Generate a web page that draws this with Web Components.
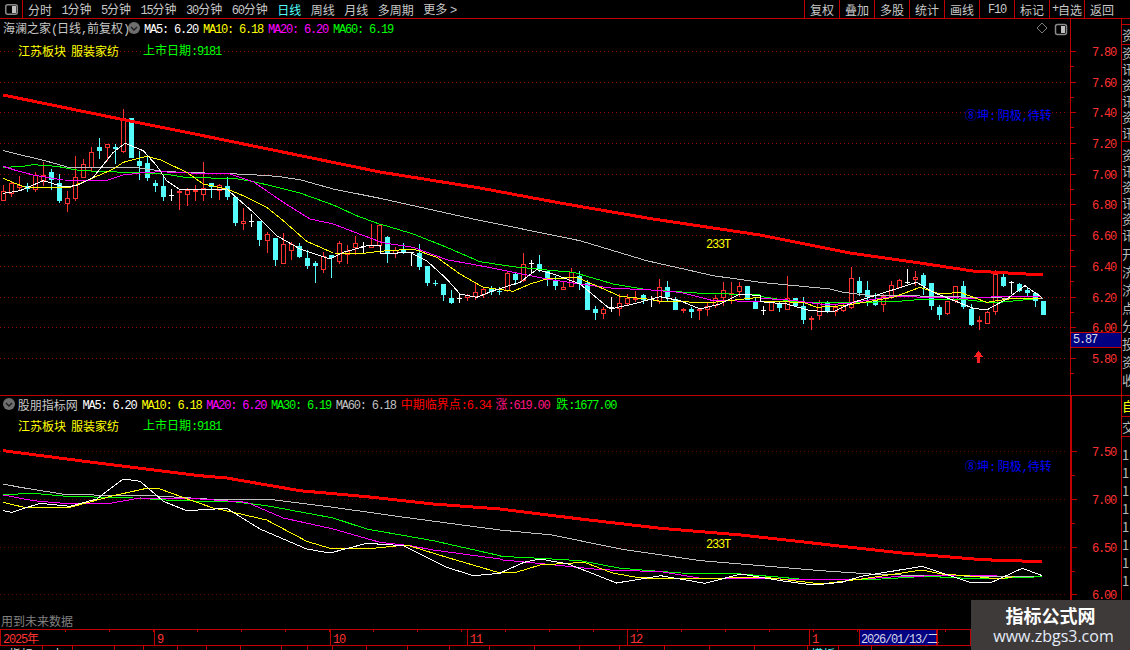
<!DOCTYPE html>
<html>
<head>
<meta charset="utf-8">
<title>海澜之家</title>
<style>
    html, body { margin: 0; background: #000; overflow: hidden; }
    body { width: 1130px; height: 650px; font: 12px "Noto Sans CJK SC", "Liberation Sans", sans-serif; }
</style>
</head>
<body>
<stock-app>
    <top-bar></top-bar>
    <chart-panel slot="upper" top="20" height="377" kind="upper">
        <legend-row>
            <q-text style="color:#c8c8c8;margin-left:3px;width:125px">海澜之家(日线,前复权)</q-text>
            <round-chevron></round-chevron>
            <q-text style="color:#fff;margin-left:4px">MA5: 6.20</q-text>
            <q-text style="color:#ff0">MA10: 6.18</q-text>
            <q-text style="color:#f0f">MA20: 6.20</q-text>
            <q-text style="color:#0f0">MA60: 6.19</q-text>
        </legend-row>
        <legend-row second style="margin-top:6px">
            <q-text style="color:#ff0;margin-left:18px;width:120px;word-spacing:2.4px">江苏板块 服装家纺</q-text>
            <q-text style="color:#0f0">上市日期:9181</q-text>
        </legend-row>
        <chart-note x="706" y="216" color="#ff0">233T</chart-note>
        <chart-note x="965" y="88" color="#0000ff">⑧坤: 阴极,待转</chart-note>
    </chart-panel>
    <chart-panel slot="lower" top="397" height="233" kind="lower">
        <legend-row style="gap:4.8px">
            <round-chevron style="margin-left:3px"></round-chevron>
            <q-text style="color:#c8c8c8;margin-left:3px;width:60px">股朋指标网</q-text>
            <q-text style="color:#fff">MA5: 6.20</q-text>
            <q-text style="color:#ff0">MA10: 6.18</q-text>
            <q-text style="color:#f0f">MA20: 6.20</q-text>
            <q-text style="color:#0f0">MA30: 6.19</q-text>
            <q-text style="color:#c0c0c0">MA60: 6.18</q-text>
            <q-text style="color:#f00">中期临界点:6.34</q-text>
            <q-text style="color:#ff1480">涨:619.00</q-text>
            <q-text style="color:#0f0;margin-left:2px">跌:1677.00</q-text>
        </legend-row>
        <legend-row second>
            <q-text style="color:#ff0;margin-left:18px;width:120px;word-spacing:2.4px">江苏板块 服装家纺</q-text>
            <q-text style="color:#0f0">上市日期:9181</q-text>
        </legend-row>
        <chart-note x="706" y="139" color="#ff0">233T</chart-note>
        <chart-note x="965" y="62" color="#0000ff">⑧坤: 阴极,待转</chart-note>
        <chart-note x="1" y="217" color="#808080">用到未来数据</chart-note>
    </chart-panel>
    <price-axis slot="axis"></price-axis>
    <side-strip slot="strip"></side-strip>
    <time-axis slot="foot"></time-axis>
    <bottom-tabs slot="foot"></bottom-tabs>
    <water-mark></water-mark>
</stock-app>

<script>
// ascii runs get the narrow mono look, 6px per char like the old bitmap font
function mix(text) {
    return text.replace(/[\x21-\x7e]+( [\x21-\x7e]+)*/g, m => `<span class="a">${m}</span>`);
}

const RED = '#c00000';
const NUM = `font-family:"Liberation Mono",monospace;letter-spacing:-1.2px`;

class QText extends HTMLElement {
    constructor() {
        super();
        this.attachShadow({ mode: 'open' });
        this.shadowRoot.innerHTML = `<style>
            :host { display: inline-block; white-space: pre; font-size: 12px; flex: none; }
            ::slotted(span.a) { ${NUM}; }
        </style><slot></slot>`;
    }
    connectedCallback() {
        this.innerHTML = mix(this.textContent);
    }
}

class LegendRow extends HTMLElement {
    constructor() {
        super();
        this.attachShadow({ mode: 'open' });
        this.shadowRoot.innerHTML = `<style>
            :host { display: flex; align-items: center; gap: 5px; height: 16px; position: relative; z-index: 1; }
            :host([second]) { margin-top: 5px; }
        </style><slot></slot>`;
    }
}

class RoundChevron extends HTMLElement {
    constructor() {
        super();
        this.attachShadow({ mode: 'open' });
        this.shadowRoot.innerHTML = `
        <style>:host { display: block; width: 12px; height: 12px; flex: none; margin-left: -5px; margin-right: -5px; }
        svg { display: block; }</style>
        <svg width="12" height="12" viewBox="0 0 12 12">
            <circle cx="6" cy="6" r="6" fill="#6e6e6e"/>
            <path d="M3 5l3 3 3-3" fill="none" stroke="#1c1c1c" stroke-width="1.4"/>
        </svg>`;
    }
}

class TopBar extends HTMLElement {
    constructor() {
        super();
        const left = ['分时', '1分钟', '5分钟', '15分钟', '30分钟', '60分钟', '日线', '周线', '月线', '多周期', '更多 >'];
        const right = ['复权', '叠加', '多股', '统计', '画线', 'F10', '标记', '+自选', '返回'];
        this.attachShadow({ mode: 'open' });
        this.shadowRoot.innerHTML = `
        <style>
            :host { display: flex; height: 20px; box-sizing: border-box; border-bottom: 1px solid ${RED}; color: #c8c8c8; font-size: 12px; }
            .icon { width: 23px; box-sizing: border-box; border-right: 1px solid ${RED}; display: flex; align-items: center; justify-content: center; }
            .tabs { flex: 1; display: flex; align-items: center; gap: 9.5px; padding-left: 5px; }
            .tools { display: flex; }
            .tools div { width: 35px; box-sizing: border-box; border-left: 1px solid ${RED}; display: flex; align-items: center; justify-content: center; }
            .tools div:nth-child(6) { padding-top: 1px; }
            .tools div:last-child { width: 46px; padding-right: 11px; }
            .on { color: #54fcfc; }
            .a { ${NUM}; }
        </style>
        <div class="icon"><svg width="13" height="11" viewBox="0 0 13 11"><rect x=".75" y=".75" width="11.5" height="9.5" rx="2" fill="none" stroke="#8a8a8a" stroke-width="1.5"/><rect x="7" y="2" width="4" height="7" fill="#c0c0c0"/></svg></div>
        <div class="tabs">${left.map(t => `<span class="${t === '日线' ? 'on' : ''}">${mix(t)}</span>`).join('')}</div>
        <div class="tools">${right.map(t => `<div>${mix(t)}</div>`).join('')}</div>`;
    }
}

// candles: type + high,bodyTop,bodyBottom,low, read off in crop coordinates
const C1 = 'r288,305,335,335 r280,283,315,323 r262,287,296,305 c282,292,300,308 r250,258,302,308 r220,257,276,290 c240,250,274,303 c256,283,336,342 r306,328,344,368 r202,265,330,335 r210,226,266,268 r174,190,238,250 c148,174,186,210 r165,166,176,215 c166,175,180,225 r60,86,188,193 c87,87,207,207 c187,216,232,272 c200,222,268,275 c274,282,291,308 c262,291,324,335 w300,317,319,335 r300,305,311,362 r298,302,317,350 r288,304,310,335 r220,296,317,335 c282,283,293,327 r284,287,305,332 c265,292,324,332 c324,324,402,410 r358,396,404,422 w376,397,399,413 c396,396,452,470 r428,436,455,492 c447,447,513,530 r433,465,524,524 r460,465,485,513 c462,472,504,506 c484,507,531,540 c516,522,530,581 r488,500,542,551 c498,498,507,566 r456,463,518,524 r468,485,498,525 r442,463,476,498 w458,470,472,492 r405,467,476,478 r405,408,470,475';
const C2 = 'c52,55,102,132 r85,92,104,118 c72,90,102,106 w98,100,102,142 c75,102,145,152 c142,142,192,200 c183,192,194,201 c195,195,228,246 c213,237,252,255 w222,237,239,252 r226,229,236,246 r188,220,235,243 r205,211,229,238 c200,210,220,228 c205,215,218,228 r160,162,216,220 c158,165,184,198 r102,136,186,190 w123,131,133,162 c108,135,152,158 c152,155,178,200 c170,186,202,213 r188,203,213,213 r147,160,203,203 c155,172,196,212 c182,192,272,272 c260,270,282,302 r263,270,285,300 w235,265,267,278 r225,252,270,290 r225,237,255,262 r215,236,240,250 c225,228,243,255 w230,241,243,263 r180,203,248,255 c186,204,235,245 c235,240,273,273 r268,269,274,282 c265,270,279,297 r268,270,273,303 r252,262,272,290 r228,236,260,268 r190,214,236,260 r190,221,223,255 r190,202,220,235 c202,202,243,243 c238,245,270,270';
const C3 = 'w200,214,216,228 r185,187,215,215 c190,195,208,218 r112,178,212,212 c177,178,202,205 c175,200,243,255 r230,238,244,272 r183,188,232,243 c186,192,220,222 r198,205,219,230 r195,197,217,220 r85,117,208,210 c115,127,163,172 c127,154,175,200 c163,183,197,202 r165,172,197,218 r125,137,170,180 r120,123,146,148 w90,130,132,135 r97,115,124,142 c103,108,140,168 c132,132,202,212 c197,205,229,242 r185,187,225,227 r140,142,187,192 c127,142,205,210 c195,210,257,260 r232,244,248,272 r217,220,254,254 r93,104,220,227 c105,114,142,145 w127,129,131,165 c133,135,155,160 c143,153,162,170 c160,162,185,203 c186,186,228,228';

function candles() {
    const all = [[C1, 90], [C2, 220], [C3, 240]];
    let out = '', i = 0;
    const col = { r: '#ff3232', c: '#54fcfc', w: '#fff' };
    for (const [src, oy] of all) {
        for (const item of src.split(' ')) {
            const t = item[0];
            const [h, a, b, l] = item.slice(1).split(',').map(v => Math.round(oy + v / 3));
            const x = 3 + 8 * i;
            out += `<rect x="${x}" y="${h}" width="1" height="${Math.max(l - h, 1)}" fill="${col[t]}"/>`;
            if (t === 'r') out += `<rect x="${x - 1.5}" y="${a + .5}" width="4" height="${Math.max(b - a - 1, 1)}" fill="#000" stroke="${col.r}"/>`;
            if (t === 'c') out += `<rect x="${x - 2}" y="${a}" width="5" height="${Math.max(b - a, 1)}" fill="${col.c}"/>`;
            if (t === 'w') out += `<rect x="${x - 2}" y="${a}" width="5" height="1" fill="#fff"/>`;
            i++;
        }
    }
    return out;
}

// each piece: [x,y,x,y..., originX, originY, scaleX, scaleY]
function seg(list) {
    return list.map(([arr, ox, oy, sx, sy]) => {
        const p = [];
        for (let i = 0; i < arr.length; i += 2) p.push(`${(ox + arr[i] / sx).toFixed(1)},${(oy + arr[i + 1] / sy).toFixed(1)}`);
        return p.join(' ');
    }).join(' ');
}

const UPPER = [
    ['#c0c0c0', 1, [[[10,185,130,214,170,225,205,235,400,235,500,248,640,253,740,256,830,262,900,272,1000,300,1140,328],0,90,3,3],[[280,0,600,65,800,125,1000,170,1140,190],380,220,3,3],[[210,150,250,160,330,170,440,170,850,180],760,240,3,3]]],
    ['#00ff00', 1, [[[10,235,60,233,100,227,170,232,230,243,300,248,400,250,500,256,560,266,700,268,750,276,800,287,900,312,1000,348,1070,380,1140,406],0,90,3,3],[[0,15,100,45,200,85,300,128,400,143,500,153,580,160,700,195,800,212,950,222,1140,228],380,220,3,3],[[0,172,100,188,200,192,400,188,500,180,600,180,700,192,840,178],760,240,3,3]]],
    ['#ff00ff', 1, [[[10,232,50,245,100,258,190,273,320,274,370,258,420,252,480,248,620,254,690,255,760,278,850,340,930,390,1000,405,1070,432,1140,458],0,90,3,3],[[0,70,100,85,200,122,300,140,400,160,500,180,600,195,700,208,800,212,900,220,1000,245,1140,247],380,220,3,3],[[0,178,100,184,200,198,270,192,400,172,500,175,640,178,720,172,840,172],760,240,3,3]]],
    ['#ffff00', 1, [[[10,268,50,285,80,296,210,295,260,275,340,240,370,220,440,202,480,212,560,250,610,285,680,300,730,320,800,355,850,395,920,457,1000,492,1090,493,1140,487],0,90,3,3],[[0,97,100,90,170,115,240,165,310,205,400,217,450,195,500,180,590,175,660,205,720,232,800,240,850,248,1000,250,1140,235],380,220,3,3],[[0,187,130,190,170,205,250,200,330,187,400,175,480,145,540,165,600,160,680,190,760,178,840,180],760,240,3,3]]],
    ['#ffffff', 1, [[[10,313,60,305,130,275,190,293,230,290,280,265,340,190,375,163,430,185,470,230,500,275,540,302,610,302,680,300,760,370,830,440,900,480,990,510,1030,490,1110,468,1140,470],0,90,3,3],[[0,105,90,100,140,125,200,180,240,225,290,235,340,215,420,190,470,152,520,165,600,195,690,270,760,255,840,233,900,245,960,270,1020,255,1080,225,1140,230],380,220,3,3],[[0,188,80,195,150,215,220,218,280,190,360,165,470,130,520,160,640,208,680,213,740,180,795,140,845,175],760,240,3,3]]],
    ['#ff0000', 3, [[[3,96,130,122,190,134,380,173,480,189,560,204,653,220,760,236,780,240,850,254,913,263,973,272,1043,276],0,0,1,1]]]
];

const LOWER = [
    ['#c0c0c0', 1, [[[10,120,60,130,200,152,460,155,620,165,800,165,1000,190,1200,218,1500,258],0,445,3,3],[[0,93,130,108,300,150,500,185,800,215,950,227,1200,232,1350,233],500,500,2.489,3]]],
    ['#00ff00', 1, [[[10,152,100,148,200,157,400,162,530,170,700,173,800,185,1000,222,1100,255,1300,290,1500,335],0,445,3,3],[[0,172,100,178,200,185,300,208,450,222,600,225,700,235,770,243,950,240,1060,232,1200,240,1350,233],500,500,2.489,3]]],
    ['#ff00ff', 1, [[[10,153,100,170,190,178,330,178,420,162,600,165,740,175,850,222,1000,255,1140,295,1230,305,1300,318,1500,345],0,445,3,3],[[0,182,130,197,250,212,400,218,500,238,700,240,860,243,1000,232,1240,228,1350,228],500,500,2.489,3]]],
    ['#ffff00', 1, [[[10,175,80,192,210,190,340,155,440,133,480,135,590,175,640,192,700,205,800,228,920,292,990,313,1120,313,1220,303,1340,340,1500,387],0,445,3,3],[[0,222,40,220,100,198,210,190,280,222,340,235,400,240,520,238,660,235,800,255,900,240,1050,213,1100,225,1180,232,1240,240,1280,233],500,500,2.489,3]]],
    ['#ffffff', 1, [[[10,200,35,205,120,178,210,187,290,165,370,105,420,112,465,150,490,172,560,200,680,193,780,255,920,315,990,327,1100,298,1210,305,1340,370,1420,395,1500,388],0,445,3,3],[[0,222,60,190,100,180,170,195,290,252,400,230,510,253,600,225,700,245,780,258,850,250,900,232,1050,202,1170,250,1220,252,1300,208,1350,230],500,500,2.489,3]]],
    ['#ff0000', 3, [[[10,20,300,58,600,95,680,102,900,140,1100,158,1300,180,1500,195],0,445,3,3],[[0,30,200,60,400,88,600,108,800,135,1000,162,1200,182,1350,188],500,500,2.489,3]]]
];

const GRID = {
    upper: [52, 83, 113, 144, 175, 205, 236, 267, 298, 328, 359],
    lower: [452, 500, 548, 595]
};

class ChartPanel extends HTMLElement {
    constructor() {
        super();
        this.attachShadow({ mode: 'open' });
        const top = this.getAttribute('top'), h = this.getAttribute('height');
        const kind = this.getAttribute('kind');
        const dot = kind === 'upper' ? '#8c0000' : '#6a0000';
        const grid = GRID[kind].map(y => `<line x1="0" x2="1068" y1="${y + .5}" y2="${y + .5}" stroke="${dot}" stroke-dasharray="1 3"/>`).join('');
        const lines = (kind === 'upper' ? UPPER : LOWER).map(([c, w, s]) =>
            `<polyline points="${seg(s)}" fill="none" stroke="${c}" stroke-width="${w}"/>`).join('');
        let extra = '';
        if (kind === 'upper') {
            extra = candles() +
                // red buy arrow and the top right panel marks
                `<path d="M978.5 352l5 6h-3.5v6h-3v-6h-3.5z" fill="#ff2020"/>
                <path d="M1042 24l5 5-5 5-5-5z" fill="none" stroke="#808080" shape-rendering="auto"/>
                <rect x="1055.5" y="25.5" width="11" height="10" rx="2" fill="none" stroke="#8a8a8a" stroke-width="1.5" shape-rendering="auto"/>
                <rect x="1061" y="27" width="4" height="7" fill="#c0c0c0"/>`;
        }
        this.shadowRoot.innerHTML = `
        <style>
            :host { display: block; position: relative; height: ${h}px; box-sizing: border-box; }
            :host([kind=upper]) { padding-top: 1px; border-bottom: 1px solid ${RED}; }
            svg { position: absolute; left: 0; top: 0; display: block; }
        </style>
        <svg width="1070" height="${h}" viewBox="0 ${top} 1070 ${h}" shape-rendering="crispEdges">${grid + extra + lines}</svg>
        <slot></slot>`;
    }
}

class ChartNote extends HTMLElement {
    constructor() {
        super();
        this.attachShadow({ mode: 'open' });
        this.shadowRoot.innerHTML = `<style>
            :host { position: absolute; left: ${this.getAttribute('x')}px; top: ${this.getAttribute('y')}px;
                color: ${this.getAttribute('color')}; white-space: pre; font-size: 12px; line-height: 16px; }
            ::slotted(span.a) { ${NUM}; }
        </style><slot></slot>`;
    }
    connectedCallback() {
        this.innerHTML = mix(this.textContent);
    }
}

class PriceAxis extends HTMLElement {
    constructor() {
        super();
        this.attachShadow({ mode: 'open' });
        const txt = (y, t) => `<text x="1116" y="${y + 5}" text-anchor="end" fill="#ff3232" style='font:12px "Liberation Mono",monospace;letter-spacing:-1.2px'>${t}</text>`;
        const up = ['7.80', '7.60', '7.40', '7.20', '7.00', '6.80', '6.60', '6.40', '6.20', '6.00', '5.80'];
        const low = ['7.50', '7.00', '6.50', '6.00'];
        let s = '';
        GRID.upper.forEach((y, i) => {
            s += `<rect x="1071" y="${y}" width="5" height="1" fill="${RED}"/><rect x="1071" y="${y + 15}" width="3" height="1" fill="${RED}"/>` + txt(y, up[i]);
        });
        GRID.lower.forEach((y, i) => {
            s += `<rect x="1072" y="${y}" width="5" height="1" fill="${RED}"/><rect x="1072" y="${y + 24}" width="3" height="1" fill="${RED}"/>` + txt(y, low[i]);
        });
        this.shadowRoot.innerHTML = `
        <style>
            :host { display: block; position: relative; width: 51px; height: 610px; box-sizing: border-box; border-left: 1px solid ${RED}; }
            svg { position: absolute; left: -1px; top: 0; display: block; }
            .last { position: absolute; left: 0; right: 0; top: 313px; height: 16px; box-sizing: border-box; background: #000080; border-top: 1px solid ${RED}; border-bottom: 1px solid ${RED};
                color: #d8d8e8; font: 12px/14px "Liberation Mono", monospace; letter-spacing: -1.2px; padding-left: 2px; }
            .rule { position: absolute; left: 0; right: 0; top: 376px; height: 1px; background: ${RED}; }
            .thick { position: absolute; left: 0; width: 1px; top: 377px; bottom: 0; background: ${RED}; }
        </style>
        <svg width="51" height="610" viewBox="1070 20 51 610" shape-rendering="crispEdges">${s}</svg>
        <div class="last">5.87</div><div class="rule"></div><div class="thick"></div>`;
    }
}

class SideStrip extends HTMLElement {
    constructor() {
        super();
        this.attachShadow({ mode: 'open' });
        const stack = (t, cls = '', style = '') => `<div class="cell ${cls}" style="${style}">${[...t].map(c => `<span>${c}</span>`).join('')}</div>`;
        this.shadowRoot.innerHTML = `
        <style>
            :host { display: block; width: 9px; height: 610px; box-sizing: border-box; border-left: 1px solid ${RED}; overflow: hidden; color: #b8b8b8; font-size: 13px; line-height: 16px; }
            .cell { border-bottom: 1px solid ${RED}; overflow: hidden; width: 14px; box-sizing: border-box; }
            span { display: block; width: 14px; }
            .y { color: #ff0; }
            .lo { border-bottom: 0; }
            .cut { line-height: 18px; }
            .n { border: 0; line-height: 18px; padding-top: 9px; }
        </style>
        <div class="cell" style="height:6px"></div>
        ${stack('资', '', 'height:20px;padding-top:2px')}
        ${stack('资讯资讯资讯', '', 'height:97px')}
        ${stack('资讯资讯资讯', 'lo', 'height:103px;padding-top:5px')}
        ${stack('开济济点分投资收', 'cut', 'height:151px')}
        ${stack('自', 'y', 'height:21px;padding-top:2px')}
        ${stack('交', '', 'height:20px;padding-top:2px')}
        ${stack('11111111', 'n')}`;
    }
}

class TimeAxis extends HTMLElement {
    constructor() {
        super();
        this.attachShadow({ mode: 'open' });
        const cells = [[154, '2025年'], [176, '9'], [137, '10'], [160, '11'], [182, '12'], [50, '1'], [78, '2026/01/13/二', 'on'], [33, ''], [0, '']];
        this.shadowRoot.innerHTML = `
        <style>
            :host { display: flex; height: 17px; box-sizing: border-box; border-top: 1px solid ${RED}; border-bottom: 1px solid ${RED}; color: #ff3232; font-size: 12px;
                background: repeating-linear-gradient(90deg, transparent 0 43px, ${RED} 43px 44px) 22px 0 / 100% 2px no-repeat; }
            div { box-sizing: border-box; border-left: 1px solid ${RED}; padding-left: 2px; line-height: 15px; white-space: pre; flex: none; }
            div:first-child { border-left: 0; padding-left: 3px; }
            .on { background: #000080; color: #d8d8e8; border-right: 1px solid ${RED}; padding-left: 1px; }
            .a { ${NUM}; }
        </style>
        ${cells.map(([w, t, c]) => `<div class="${c || ''}" style="${w ? `width:${w}px` : 'flex:1'}">${mix(t)}</div>`).join('')}`;
    }
}

class BottomTabs extends HTMLElement {
    constructor() {
        super();
        this.attachShadow({ mode: 'open' });
        const stops = [43, 73, 115, 144, 178, 207, 241, 282, 308, 333, 367, 408, 450, 490, 535, 580, 620, 665, 710, 755, 808, 839, 872];
        const names = ['指标', '大', '', '', '', '', '', '', '', '', '', '', '', '', '', '', '', '', '', '', '', '模板'];
        let prev = 0;
        const cells = stops.map((x, i) => {
            const html = `<div style="width:${x - prev}px" class="${i === 21 ? 'on' : ''}">${names[i] || ''}</div>`;
            prev = x;
            return html;
        }).join('');
        this.shadowRoot.innerHTML = `
        <style>
            :host { display: flex; height: 4px; overflow: hidden; color: #ddd; font-size: 12px; line-height: 16px; }
            div { box-sizing: border-box; border-right: 1px solid ${RED}; text-align: center; flex: none; height: 4px; overflow: hidden; }
            .on { color: #54fcfc; }
        </style>${cells}`;
    }
}

class WaterMark extends HTMLElement {
    constructor() {
        super();
        this.attachShadow({ mode: 'open' });
        this.shadowRoot.innerHTML = `
        <style>
            :host { position: absolute; right: 0; bottom: 0; width: 159px; height: 50px; background: #3e3a39; text-align: center; color: #fff; z-index: 2; }
            .t { font: 700 18px/22px "Noto Sans CJK SC", sans-serif; margin-top: 4px; }
            .u { font: 16px/20px "Open Sans", sans-serif; color: #e4ecf8; padding-left: 6px; }
        </style>
        <div class="t">指标公式网</div><div class="u">www.zbgs3.com</div>`;
    }
}

class StockApp extends HTMLElement {
    constructor() {
        super();
        this.attachShadow({ mode: 'open' });
        this.shadowRoot.innerHTML = `
        <style>
            :host { display: flex; flex-direction: column; position: relative; width: 1130px; height: 650px; background: #000; overflow: hidden; }
            .main { display: grid; grid-template-columns: 1070px 51px 9px; height: 610px; flex: none; }
            .charts { display: flex; flex-direction: column; }
        </style>
        <slot></slot>
        <div class="main">
            <div class="charts"><slot name="upper"></slot><slot name="lower"></slot></div>
            <div><slot name="axis"></slot></div>
            <div><slot name="strip"></slot></div>
        </div>
        <slot name="foot"></slot>`;
    }
}

customElements.define('q-text', QText);
customElements.define('legend-row', LegendRow);
customElements.define('round-chevron', RoundChevron);
customElements.define('top-bar', TopBar);
customElements.define('chart-panel', ChartPanel);
customElements.define('chart-note', ChartNote);
customElements.define('price-axis', PriceAxis);
customElements.define('side-strip', SideStrip);
customElements.define('time-axis', TimeAxis);
customElements.define('bottom-tabs', BottomTabs);
customElements.define('water-mark', WaterMark);
customElements.define('stock-app', StockApp);
</script>
</body>
</html>
